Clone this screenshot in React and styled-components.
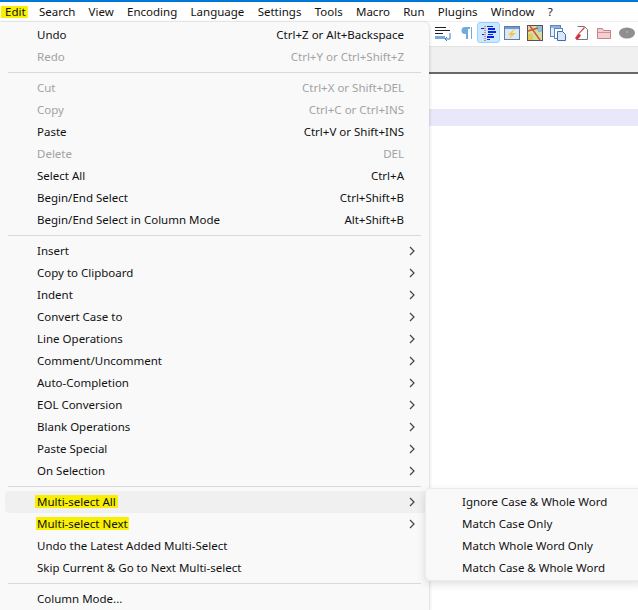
import React from "react";
import styled, { createGlobalStyle } from "styled-components";

const Global = createGlobalStyle`
  html, body { margin: 0; padding: 0; background: #fff; overflow: hidden; }
  #root { width: 638px; height: 610px; }
`;
const Page = styled.div`
  position: relative; width: 638px; height: 610px; overflow: hidden; box-sizing: border-box;
  display: flex; flex-direction: column;
  border-top: 2px solid #0078d7;
  font: 11.5px "Noto Sans", sans-serif; color: #111;
`;
const MenuBar = styled.div`
  display: flex; height: 19px; flex: none; align-items: center; padding-left: 5px; gap: 13.3px;
  border-bottom: 1px solid #f0f0f0;
`;
const Toolbar = styled.div`
  display: flex; justify-content: flex-end; align-items: flex-start; height: 24px; flex: none;
`;
const Slot = styled.div`
  width: 23px; height: 21px; box-sizing: border-box; flex: none;
  display: flex; align-items: center; justify-content: center;
  border-radius: 3px;
  ${p => p.$active && "background:#cce8ff;border:1px solid #99d1ff;"}
`;
const TabStrip = styled.div`
  height: 26px; flex: none; background: #f0f0f0; border-top: 1px solid #e4e4e4; box-sizing: border-box;
`;
const Editor = styled.div`
  flex: 1; border-top: 2px solid #696969; padding-top: 35px; background: #fff;
`;
const CurrentLine = styled.div`height: 17px; background: #e8e8fa;`;
const Highlight = styled.span`
  display: inline-block;
  background: linear-gradient(#f8f000, #f8f000) center / 100% ${p => p.$h}px no-repeat;
  padding: ${p => p.$pad || "0"};
  margin: ${p => p.$mar || "0"};
`;
const Menu = styled.div`
  position: absolute; left: 0; top: 20px; width: 429px; height: 590px; box-sizing: border-box;
  background: #f9f9f9; padding: 2px 0; border-top-right-radius: 6px;
  box-shadow: 1px 0 3px rgba(0,0,0,.14);
`;
const Row = styled.div`
  display: grid; grid-template-columns: 1fr auto 25px; height: 22px; align-items: center;
  margin-left: ${p => (p.$hover ? "5px" : "0")};
  padding-left: ${p => (p.$hover ? "32px" : "37px")};
  color: ${p => (p.$disabled ? "#a2a2a2" : "#111")};
  background: ${p => (p.$hover ? "#f0f0f0" : "transparent")};
  border-radius: ${p => (p.$hover ? "4px 0 0 4px" : "0")};
`;
const Label = styled.span`padding-bottom: 2px;`;
const Arrow = styled.svg`width: 6px; height: 10px; justify-self: end; margin-right: 14px;`;
const Sep = styled.div`height: 1px; background: #d9d9d9; margin: 4px 8px;`;
const Sub = styled.div`
  position: absolute; left: 425px; top: 486px; width: 220px; height: 93px; box-sizing: border-box;
  padding: 2px 0 0 36px; background: #f9f9f9; border: 1px solid #ececec; border-radius: 6px;
  box-shadow: 0 3px 8px rgba(0,0,0,.13);
`;
const SubRow = styled.div`height: 22px; display: flex; align-items: center; padding-bottom: 2px; box-sizing: border-box;`;

const menus = ["Search","View","Encoding","Language","Settings","Tools","Macro","Run","Plugins","Window","?"];
const Chevron = () => <Arrow viewBox="0 0 6 10"><path d="M1 1l4 4-4 4" fill="none" stroke="#444" strokeWidth="1.2"/></Arrow>;
const Item = ({ l, s, d, sub, hover }) => (
  <Row $disabled={d} $hover={hover}><Label>{l}</Label><Label>{s}</Label>{sub ? <Chevron/> : null}</Row>
);

const Svg = ({ children }) => <svg width="16" height="16" viewBox="0 0 16 16">{children}</svg>;
const icons = [
  <Svg><path d="M0 2.5h11M0 5.5h15M0 8.5h8" stroke="#222" fill="none"/><path d="M0 11h10v3H0z" fill="#7aa7dc"/><path d="M15 8v6h-5M12 12l-2 2 2 2" stroke="#3f78c0" fill="none"/></Svg>,
  <Svg><path d="M12 2H7a3.5 3.5 0 0 0 0 7h1v5h2V4h2zM13 2h1v12h-1z" fill="#74a9dc"/></Svg>,
  <Svg><path d="M4 1v15" stroke="#d02a2a" strokeDasharray="1 1" fill="none"/><path d="M6 1h6v1H6zM7 3h7v2H7zM7 6h8v2H7zM7 9h5v1H7zM6 11h7v2H6zM6 14h3v1H6zM0 3h3v1H0zM1 9h2v1H1z" fill="#0a22e0"/></Svg>,
  <Svg><rect x="0.5" y="1.5" width="15" height="13" fill="#dfe9f6" stroke="#5a7fae"/><path d="M1 2h14v2H1z" fill="#6f9bd3"/><path d="M10 4L4 10h3l-2 4 7-6H8l3-4z" fill="#f2c84b"/></Svg>,
  <Svg><rect x="0.5" y="0.5" width="15" height="15" fill="#cfe0a0" stroke="#555"/><path d="M9 1h6v6H11z" fill="#8cc2d8"/><path d="M1 9h5v6H1z" fill="#e7c65a"/><path d="M3 1l10 14M1 6l10-3" stroke="#d8503c" strokeWidth="1.4" fill="none"/></Svg>,
  <Svg><rect x="0.5" y="0.5" width="10" height="11" fill="#e4edf8" stroke="#5b86c4"/><path d="M1 1h9v2H1z" fill="#8fb2de"/><rect x="4.5" y="3.5" width="8" height="10" fill="#fff" stroke="#5b86c4"/><path d="M7.5 6.5h5l3 3v6h-8z" fill="#dbe7f6" stroke="#3c6cb4"/></Svg>,
  <Svg><path d="M4.5 1.5h7l3 3v10h-11" fill="#fff" stroke="#777"/><path d="M11 2L5 9l-3 4 2 2 3-3 1-2-2-1 6-6z" fill="#d8333c"/></Svg>,
  <Svg><path d="M1.5 3.5h5l1 2h7v8h-13z" fill="#f2cfd0" stroke="#c98088"/><path d="M2 7h12v1H2z" fill="#d98e94"/></Svg>,
  <Svg><ellipse cx="8" cy="8" rx="8" ry="5.5" fill="#8f8f8f"/><circle cx="8" cy="7" r="1" fill="#b0b0b0"/></Svg>,
];
const shortcuts1 = [
  { l: "Cut", s: "Ctrl+X or Shift+DEL", d: 1 }, { l: "Copy", s: "Ctrl+C or Ctrl+INS", d: 1 },
  { l: "Paste", s: "Ctrl+V or Shift+INS" }, { l: "Delete", s: "DEL", d: 1 },
  { l: "Select All", s: "Ctrl+A" }, { l: "Begin/End Select", s: "Ctrl+Shift+B" },
  { l: "Begin/End Select in Column Mode", s: "Alt+Shift+B" },
];
const subs = ["Insert","Copy to Clipboard","Indent","Convert Case to","Line Operations","Comment/Uncomment","Auto-Completion","EOL Conversion","Blank Operations","Paste Special","On Selection"];

export default function App() {
  return (
    <Page>
      <Global />
      <MenuBar>
        <Highlight $h={12} $pad="0 2px 0 4px" $mar="0 -2px 0 -4px">Edit</Highlight>
        {menus.map(m => <span key={m}>{m}</span>)}
      </MenuBar>
      <Toolbar>{icons.map((ic, i) => <Slot key={i} $active={i === 2}>{ic}</Slot>)}</Toolbar>
      <TabStrip />
      <Editor><CurrentLine /></Editor>
      <Menu>
        <Item l="Undo" s="Ctrl+Z or Alt+Backspace" />
        <Item l="Redo" s="Ctrl+Y or Ctrl+Shift+Z" d />
        <Sep />
        {shortcuts1.map(r => <Item key={r.l} {...r} />)}
        <Sep />
        {subs.map(l => <Item key={l} l={l} sub />)}
        <Sep />
        <Item hover sub l={<Highlight $h={13} $pad="0 2px" $mar="0 -2px">Multi-select All</Highlight>} />
        <Item sub l={<Highlight $h={13} $pad="0 1px" $mar="0 -1px">Multi-select Next</Highlight>} />
        <Item l="Undo the Latest Added Multi-Select" />
        <Item l="Skip Current & Go to Next Multi-select" />
        <Sep />
        <Item l="Column Mode..." />
      </Menu>
      <Sub>
        <SubRow>Ignore Case &amp; Whole Word</SubRow>
        <SubRow>Match Case Only</SubRow>
        <SubRow>Match Whole Word Only</SubRow>
        <SubRow>Match Case &amp; Whole Word</SubRow>
      </Sub>
    </Page>
  );
}
